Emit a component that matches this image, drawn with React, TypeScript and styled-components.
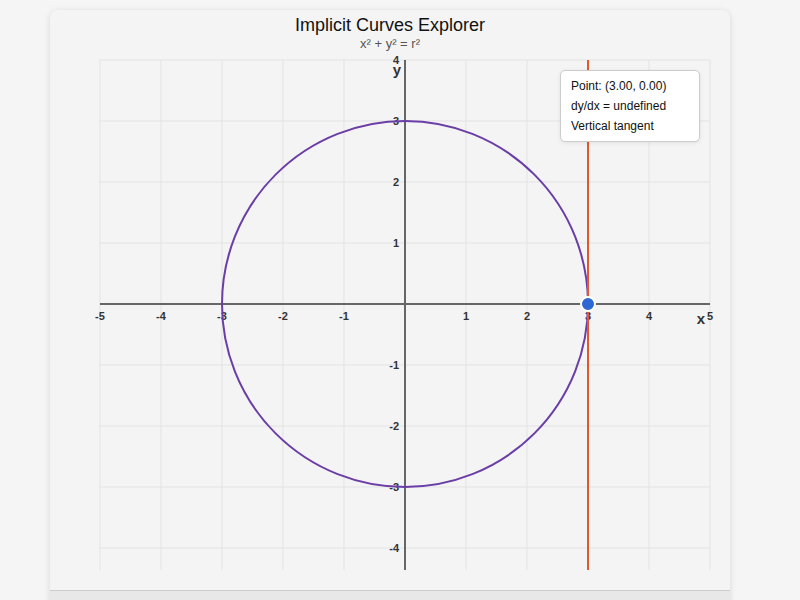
import React, { Component } from 'react';
import styled, { createGlobalStyle } from 'styled-components';

const GlobalStyle = createGlobalStyle`
  html, body {
    margin: 0;
    padding: 0;
    background: #f5f5f5;
    font-family: 'Liberation Sans', Arial, Helvetica, sans-serif;
  }
`;

const Page = styled.div`
  display: flex;
  padding: 10px 0 0 50px;
`;

const Card = styled.div`
  position: relative;
  width: 680px;
  background: #f4f4f4;
  border-radius: 8px;
  box-shadow: 0 1px 6px rgba(0, 0, 0, 0.12);
  padding-top: 4px;
  display: flex;
  flex-direction: column;
  align-items: center;
`;

const Title = styled.h1`
  margin: 0;
  font-size: 18px;
  line-height: 22px;
  font-weight: normal;
  color: #111;
`;

const Subtitle = styled.div`
  font-size: 13px;
  line-height: 16px;
  color: #555;
`;

const Plot = styled.svg`
  display: block;
  width: 680px;
  height: 538px;

  .grid {
    stroke: #e3e3e3;
    stroke-width: 1;
  }
  .axis {
    stroke: #666;
    stroke-width: 2;
  }
  .tick {
    font-size: 11px;
    font-weight: bold;
    fill: #333;
  }
  .axis-label {
    font-size: 15px;
    font-weight: bold;
    fill: #333;
  }
`;

const Tooltip = styled.div`
  position: absolute;
  left: 510px;
  top: 60px;
  width: 118px;
  padding: 5px 10px;
  background: #fff;
  border: 1px solid #ccc;
  border-radius: 5px;
  box-shadow: 0 1px 4px rgba(0, 0, 0, 0.08);
  font-size: 12px;
  line-height: 20px;
  color: #111;
`;

// control strip below the plot; only its top edge is in view
const Controls = styled.div`
  align-self: stretch;
  border-top: 1px solid #ccc;
  background: #e8e8e8;
  border-radius: 0 0 8px 8px;
  height: 80px;
`;

interface ChartProps {
  radius: number;
  pointX: number;
}

// plot box inside the svg
const LEFT = 50;
const RIGHT = 660;
const TOP = 8;
const BOTTOM = 518;
const UNIT = 61;
const OX = 355;
const OY = 252;

const sx = (v: number) => OX + v * UNIT;
const sy = (v: number) => OY - v * UNIT;

class Chart extends Component<ChartProps> {
  render() {
    const { radius, pointX } = this.props;
    const xs = [-5, -4, -3, -2, -1, 0, 1, 2, 3, 4, 5];
    const ys = [-4, -3, -2, -1, 0, 1, 2, 3, 4];
    return (
      <Plot viewBox="0 0 680 538">
        {xs.map(v => (
          <line key={'gx' + v} className="grid" x1={sx(v)} x2={sx(v)} y1={TOP} y2={BOTTOM} />
        ))}
        {ys.map(v => (
          <line key={'gy' + v} className="grid" x1={LEFT} x2={RIGHT} y1={sy(v)} y2={sy(v)} />
        ))}
        <line className="axis" x1={LEFT} x2={RIGHT} y1={OY} y2={OY} />
        <line className="axis" x1={OX} x2={OX} y1={TOP} y2={BOTTOM} />

        {xs.filter(v => v !== 0).map(v => (
          <text key={'tx' + v} className="tick" x={sx(v)} y={OY + 16} textAnchor="middle">
            {v}
          </text>
        ))}
        {ys.filter(v => v !== 0).map(v => (
          <text key={'ty' + v} className="tick" x={OX - 6} y={sy(v) + 4} textAnchor="end">
            {v}
          </text>
        ))}
        <text className="axis-label" x={RIGHT - 5} y={OY + 20} textAnchor="end">x</text>
        <text className="axis-label" x={OX - 4} y={TOP + 15} textAnchor="end">y</text>

        <circle cx={OX} cy={OY} r={radius * UNIT} fill="none" stroke="#6a3ea6" strokeWidth={2} />
        <line x1={sx(pointX)} x2={sx(pointX)} y1={TOP} y2={BOTTOM} stroke="#e2572b" strokeWidth={2} />
        <circle cx={sx(pointX)} cy={OY} r={7} fill="#2e68d2" stroke="#fff" strokeWidth={2} />
      </Plot>
    );
  }
}

export default function App() {
  const radius = 3;
  const px = 3;
  return (
    <>
      <GlobalStyle />
      <Page>
        <Card>
          <Title>Implicit Curves Explorer</Title>
          <Subtitle>x² + y² = r²</Subtitle>
          <Chart radius={radius} pointX={px} />
          <Tooltip>
            <div>Point: ({px.toFixed(2)}, {(0).toFixed(2)})</div>
            <div>dy/dx = undefined</div>
            <div>Vertical tangent</div>
          </Tooltip>
          <Controls />
        </Card>
      </Page>
    </>
  );
}
